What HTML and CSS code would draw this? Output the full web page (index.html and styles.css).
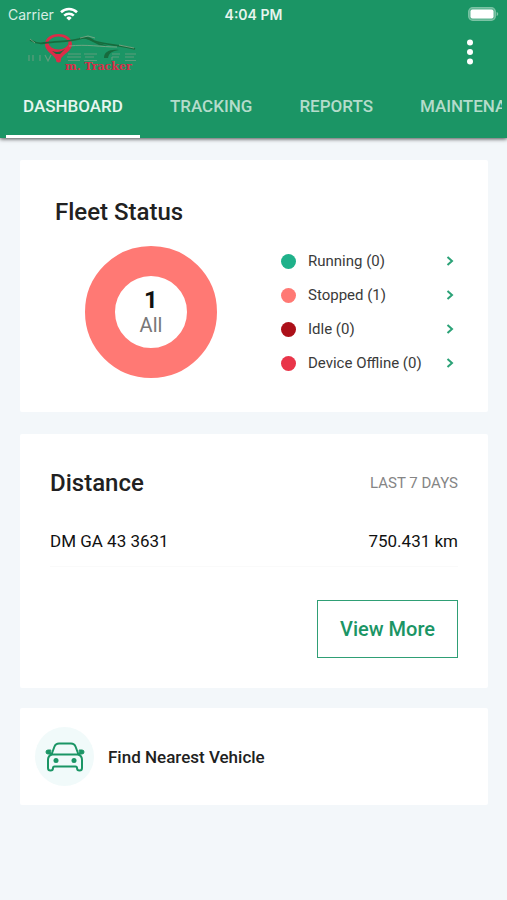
FILE: index.html
```html
<!DOCTYPE html>
<html lang="en">
<head>
<meta charset="utf-8">
<meta name="viewport" content="width=device-width, initial-scale=1">
<title>Dashboard</title>
<link rel="stylesheet" href="styles.css">
</head>
<body>
<header class="header">
  <div class="status">
    <div class="status-left">
      <span>Carrier</span>
      <svg width="18" height="14" viewBox="0 0 18 14" fill="none" stroke="#fff" stroke-width="2.6" aria-hidden="true">
        <path d="M1 5.2a11.5 11.5 0 0 1 16 0"/>
        <path d="M4.2 8.6a7 7 0 0 1 9.6 0"/>
        <path d="M9 13.6 6.3 10.9a3.9 3.9 0 0 1 5.4 0z" fill="#fff" stroke="none"/>
      </svg>
    </div>
    <span class="clock">4:04 PM</span>
    <div class="status-right">
      <svg width="31" height="14" viewBox="0 0 31 14" aria-hidden="true">
        <rect x=".7" y=".7" width="26.6" height="12.6" rx="4" fill="#5eb492" stroke="#7cc3a5" stroke-width="1.3"/>
        <rect x="2.5" y="2.5" width="23" height="9" rx="2" fill="#fff"/>
        <path d="M28.6 5v4c1-.3 1.6-1.100 1.600-2s-.6-1.700-1.600-2z" fill="#7cc3a5"/>
      </svg>
    </div>
  </div>
  <div class="appbar">
    <svg class="logo" width="110" height="44" viewBox="0 -1 110 44" role="img" aria-label="m. Tracker">
      <g fill="none" stroke="#5f9d7c" stroke-width="1.200">
        <path d="M1 24v6M5 24v6M12 24v6M17 24l3 6 3-6"/>
        <path d="M40 23h13M39 26h14M40 29.500h12M56 23h13M57 26h9M56 29.500h13M84 23h8M84 26h7M84 29v-3M97 23h11M97 26h9M97 29.500h11"/>
      </g>
      <path d="M30.500 3C22.500 3 17 7.500 17 13.500 17 20 25 23 28 28.500h4.500C35 23 44 20 44 13.500 44 7.500 38.500 3 30.500 3z" fill="#dc2c48"/>
      <ellipse cx="30.500" cy="12" rx="10" ry="6.500" fill="#1b9565"/>
      <path d="M24 20c5 2 9 1 13-2l-5 5h-4z" fill="#176b3d"/>
      <circle cx="30.500" cy="29" r="2.500" fill="#dc2c48"/>
      <path d="M2 9c5 3 9 4 14 3 14-2 24-1 35-4 5-2 11-1 15 2 11 4 28 4 41 8" fill="none" stroke="#176b3d" stroke-width="1.800"/>
      <path d="M55 7c6-1 8 0 13 4l12 4-9-1-10-5z" fill="#176b3d"/>
      <path d="M2 8l5 4M41 15c18-2 32 1 48 1M52 7l8-2 7 2M91 14l15 3" fill="none" stroke="#86a98a" stroke-width=".8"/>
      <path d="M76 27c0-6 5-9 15-8-7 1-10 3-11 8z" fill="#176b3d"/>
      <text class="logo-text" x="37" y="39">m. Tracker</text>
    </svg>
    <button class="more" type="button" aria-label="More options">
      <svg width="8" height="26" viewBox="0 0 8 26" fill="#fff" aria-hidden="true"><circle cx="4" cy="3.500" r="3"/><circle cx="4" cy="13" r="3"/><circle cx="4" cy="22.500" r="3"/></svg>
    </button>
  </div>
  <nav class="tabs">
    <a class="tab active" href="#dashboard" aria-current="page">DASHBOARD</a>
    <a class="tab" href="#tracking">TRACKING</a>
    <a class="tab" href="#reports">REPORTS</a>
    <a class="tab" href="#maintenance">MAINTENANCE</a>
  </nav>
</header>
<main class="content">
  <section class="card fleet">
    <h2>Fleet Status</h2>
    <div class="fleet-body">
      <div class="donut"><strong>1</strong><span>All</span></div>
      <ul class="legend">
        <li><a href="#running"><i class="dot running"></i><span>Running (0)</span><svg class="chevron" width="8" height="10" viewBox="0 0 8 10"><path d="M1.500 1 6 5 1.500 9"/></svg></a></li>
        <li><a href="#stopped"><i class="dot stopped"></i><span>Stopped (1)</span><svg class="chevron" width="8" height="10" viewBox="0 0 8 10"><path d="M1.500 1 6 5 1.500 9"/></svg></a></li>
        <li><a href="#idle"><i class="dot idle"></i><span>Idle (0)</span><svg class="chevron" width="8" height="10" viewBox="0 0 8 10"><path d="M1.500 1 6 5 1.500 9"/></svg></a></li>
        <li><a href="#offline"><i class="dot offline"></i><span>Device Offline (0)</span><svg class="chevron" width="8" height="10" viewBox="0 0 8 10"><path d="M1.500 1 6 5 1.500 9"/></svg></a></li>
      </ul>
    </div>
  </section>
  <section class="card distance">
    <div class="distance-head"><h2>Distance</h2><span class="period">LAST 7 DAYS</span></div>
    <div class="distance-row"><span>DM GA 43 3631</span><span>750.431 km</span></div>
    <button class="view-more" type="button">View More</button>
  </section>
  <a class="card nearest" href="#nearest">
    <span class="car">
      <svg width="40" height="30" viewBox="0 0 40 30" fill="none" stroke="#1b9565" stroke-width="2" stroke-linejoin="round" stroke-linecap="round" aria-hidden="true">
        <path d="M6.500 12.500 9.500 4.500Q10.700 1.500 14 1.500h12q3.300 0 4.500 3l3 8z"/>
        <path d="M6.500 12.500Q3 14 3 18v8q0 2.500 2.500 2.500T8 26q0-1.500 1.500-1.500h21q1.500 0 1.500 1.500 0 2.500 2.500 2.500T37 26v-8q0-4-3.500-5.500"/>
        <path d="M5.500 8H3Q1 8 1 10t2 2h2zM34.500 8H37q2 0 2 2t-2 2h-2z" fill="#1b9565" stroke-width="1"/>
        <circle cx="11" cy="18.500" r="2.500" fill="#1b9565" stroke="none"/>
        <circle cx="29" cy="18.500" r="2.500" fill="#1b9565" stroke="none"/>
      </svg>
    </span>
    <span>Find Nearest Vehicle</span>
  </a>
</main>
</body>
</html>
```

FILE: styles.css
```css
* { box-sizing: border-box; }
body {
  margin: 0;
  min-height: 100vh;
  background: #f3f7fa;
  color: #212121;
  font-family: Roboto, "Liberation Sans", sans-serif;
  overflow-x: hidden;
}
a { color: inherit; text-decoration: none; }
button { font: inherit; cursor: pointer; }
h2 { margin: 0; font-size: 24px; line-height: 32px; font-weight: 500; }

.header {
  background: #1b9565;
  color: #fff;
  box-shadow: 0 1px 4px rgba(0, 0, 0, .7);
}
.status {
  display: grid;
  grid-template-columns: 1fr auto 1fr;
  align-items: center;
  height: 28px;
  padding: 0 8px;
  font-family: Inter, sans-serif;
  font-size: 14px;
}
.status-left { display: flex; align-items: center; gap: 6px; color: #d6ede3; }
.status-right { display: flex; justify-content: flex-end; }
.clock { font-weight: 600; color: #e6f4ee; }
.appbar {
  display: flex;
  justify-content: space-between;
  align-items: center;
  height: 48px;
  padding: 0 25px 0 28px;
}
.logo-text { font: bold 11px "DejaVu Serif", serif; fill: #dc2c48; }
.more {
  display: flex;
  justify-content: center;
  width: 24px;
  padding: 0;
  border: 0;
  background: none;
}
.tabs {
  display: flex;
  gap: 13px;
  height: 62px;
  margin: 0 5px 0 6px;
  overflow: hidden;
}
.tab {
  flex: none;
  padding: 18px 17px 0;
  border-bottom: 3px solid transparent;
  font-size: 17px;
  line-height: 24px;
  font-weight: 500;
  color: #b4dccb;
}
.tab.active { color: #e6f6ef; border-color: #fff; }

.content { display: flex; flex-direction: column; padding: 22px 19px 22px 20px; }
.card { background: #fff; border-radius: 2px; }

.fleet { padding: 36px 34px 32px 35px; margin-bottom: 22px; }
.fleet-body {
  display: flex;
  justify-content: space-between;
  align-items: center;
  gap: 16px;
  margin-top: 16px;
  padding-left: 30px;
}
.donut {
  display: flex;
  flex: none;
  flex-direction: column;
  align-items: center;
  justify-content: center;
  width: 132px;
  height: 132px;
  border: 30px solid #ff7974;
  border-radius: 50%;
}
.donut strong { font-size: 24px; line-height: 26px; font-weight: 700; color: #111; }
.donut span { font-size: 20px; line-height: 24px; color: #777; }
.legend { width: 173px; margin: 0; padding: 0; list-style: none; }
.legend a {
  display: flex;
  align-items: center;
  height: 34px;
  font-size: 15px;
  color: #3a3a3a;
}
.dot { width: 15px; height: 15px; margin-right: 12px; border-radius: 50%; }
.running { background: #1fb18a; }
.stopped { background: #ff7974; }
.idle { background: #ac1019; }
.offline { background: #e93549; }
.chevron { margin-left: auto; fill: none; stroke: #2ba277; stroke-width: 2; }

.distance { padding: 33px 30px 30px; margin-bottom: 20px; }
.distance-head, .distance-row { display: flex; justify-content: space-between; align-items: center; }
.period { font-size: 15px; color: #858585; }
.distance-row {
  height: 52px;
  margin-top: 16px;
  border-bottom: 1px solid #fafafa;
  font-size: 17px;
  color: #111;
}
.view-more {
  display: block;
  height: 58px;
  margin: 33px 0 0 auto;
  padding: 0 22px;
  border: 1px solid #2f9f75;
  background: #fff;
  color: #1b9565;
  font-size: 20px;
  font-weight: 500;
}

.nearest {
  display: flex;
  align-items: center;
  gap: 14px;
  height: 97px;
  padding: 0 15px;
  font-size: 17px;
  font-weight: 500;
}
.car {
  display: flex;
  align-items: center;
  justify-content: center;
  width: 59px;
  height: 59px;
  border-radius: 50%;
  background: #f1fafa;
}
```
